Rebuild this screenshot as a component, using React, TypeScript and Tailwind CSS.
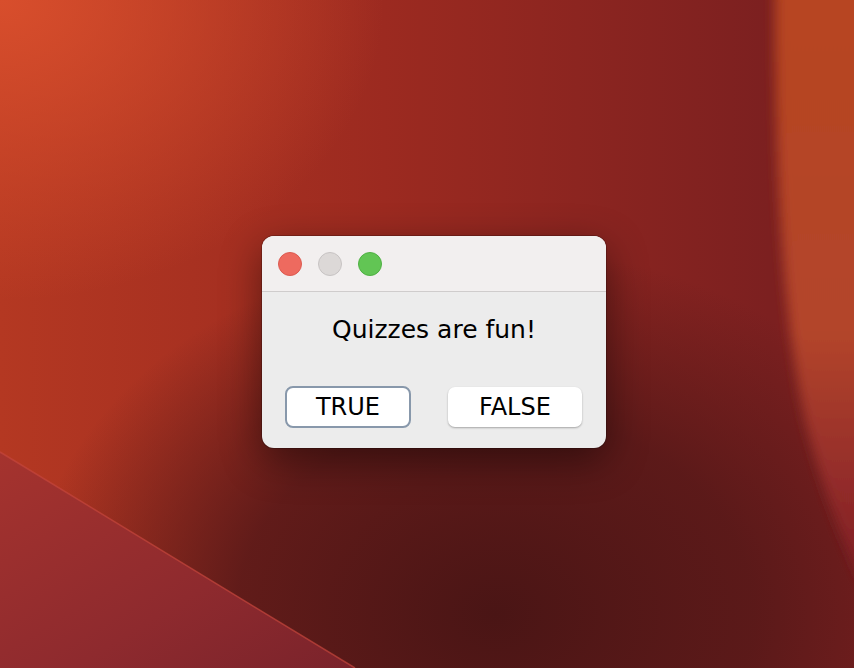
import React from 'react'

function Wallpaper() {
  return (
    <svg className="absolute inset-0 h-full w-full" viewBox="0 0 854 668" preserveAspectRatio="none">
      <defs>
        <linearGradient id="base" x1="0" y1="0" x2="1" y2="0">
          <stop offset="0" stopColor="#b43822" />
          <stop offset="0.45" stopColor="#9c2a20" />
          <stop offset="0.9" stopColor="#7c2020" />
        </linearGradient>
        <radialGradient id="glow" cx="0" cy="0" r="0.45">
          <stop offset="0" stopColor="#d84e2c" stopOpacity="1" />
          <stop offset="1" stopColor="#d84e2c" stopOpacity="0" />
        </radialGradient>
        <radialGradient id="shade" cx="0.58" cy="0.92" r="0.55">
          <stop offset="0" stopColor="#4a1515" stopOpacity="1" />
          <stop offset="0.55" stopColor="#551818" stopOpacity="0.85" />
          <stop offset="1" stopColor="#551818" stopOpacity="0" />
        </radialGradient>
        <linearGradient id="band" x1="0" y1="0" x2="0" y2="1">
          <stop offset="0" stopColor="#b7441f" />
          <stop offset="0.55" stopColor="#b3452c" />
          <stop offset="0.85" stopColor="#8a2528" />
          <stop offset="1" stopColor="#7a2026" />
        </linearGradient>
        <linearGradient id="wedge" x1="0" y1="0" x2="1" y2="1">
          <stop offset="0" stopColor="#a5332e" />
          <stop offset="0.6" stopColor="#8e2a2e" />
          <stop offset="1" stopColor="#7a232b" />
        </linearGradient>
        <filter id="blur" x="-20%" y="-20%" width="140%" height="140%">
          <feGaussianBlur stdDeviation="6" />
        </filter>
      </defs>
      <rect width="854" height="668" fill="url(#base)" />
      <rect width="854" height="668" fill="url(#glow)" />
      <rect width="854" height="668" fill="url(#shade)" />
      <path d="M775 -20 C 775 150, 780 300, 805 420 C 825 500, 850 560, 880 620 L 880 -20 Z" fill="url(#band)" filter="url(#blur)" />
      <path d="M0 452 L 355 668 L 0 668 Z" fill="url(#wedge)" />
      <path d="M0 452 L 355 668" stroke="#c5463c" strokeWidth="1.5" opacity="0.7" />
    </svg>
  )
}

export default function App() {
  return (
    <div className="relative flex h-[668px] w-[854px] overflow-hidden font-['DejaVu_Sans',sans-serif]">
      <Wallpaper />
      <div className="relative mt-[236px] ml-[262px] flex h-[212px] w-[344px] flex-col overflow-hidden rounded-[12px] bg-[#ececec] shadow-[0_12px_40px_rgba(0,0,0,0.45)] ring-1 ring-black/20">
        <div className="flex h-[56px] items-center gap-4 border-b border-[#cfcccc] bg-[#f2efef] pl-4">
          <span className="h-6 w-6 rounded-full border border-[#dc5a50] bg-[#ee6a5f]" />
          <span className="h-6 w-6 rounded-full border border-[#c7c3c3] bg-[#dcd8d7]" />
          <span className="h-6 w-6 rounded-full border border-[#4fb043] bg-[#62c554]" />
        </div>
        <div className="flex flex-1 flex-col items-center pt-[25px]">
          <p className="text-[25px] leading-none text-black">Quizzes are fun!</p>
          <div className="mt-[44px] flex w-full items-center justify-between pl-[23px] pr-[24px]">
            <button className="flex h-[42px] w-[126px] items-center justify-center rounded-[8px] border-2 border-[#8898ab] bg-white text-[24px] text-black">
              TRUE
            </button>
            <button className="flex h-[40px] w-[134px] items-center justify-center rounded-[7px] bg-white text-[24px] text-black shadow-[0_1px_2px_rgba(0,0,0,0.3)]">
              FALSE
            </button>
          </div>
        </div>
      </div>
    </div>
  )
}
